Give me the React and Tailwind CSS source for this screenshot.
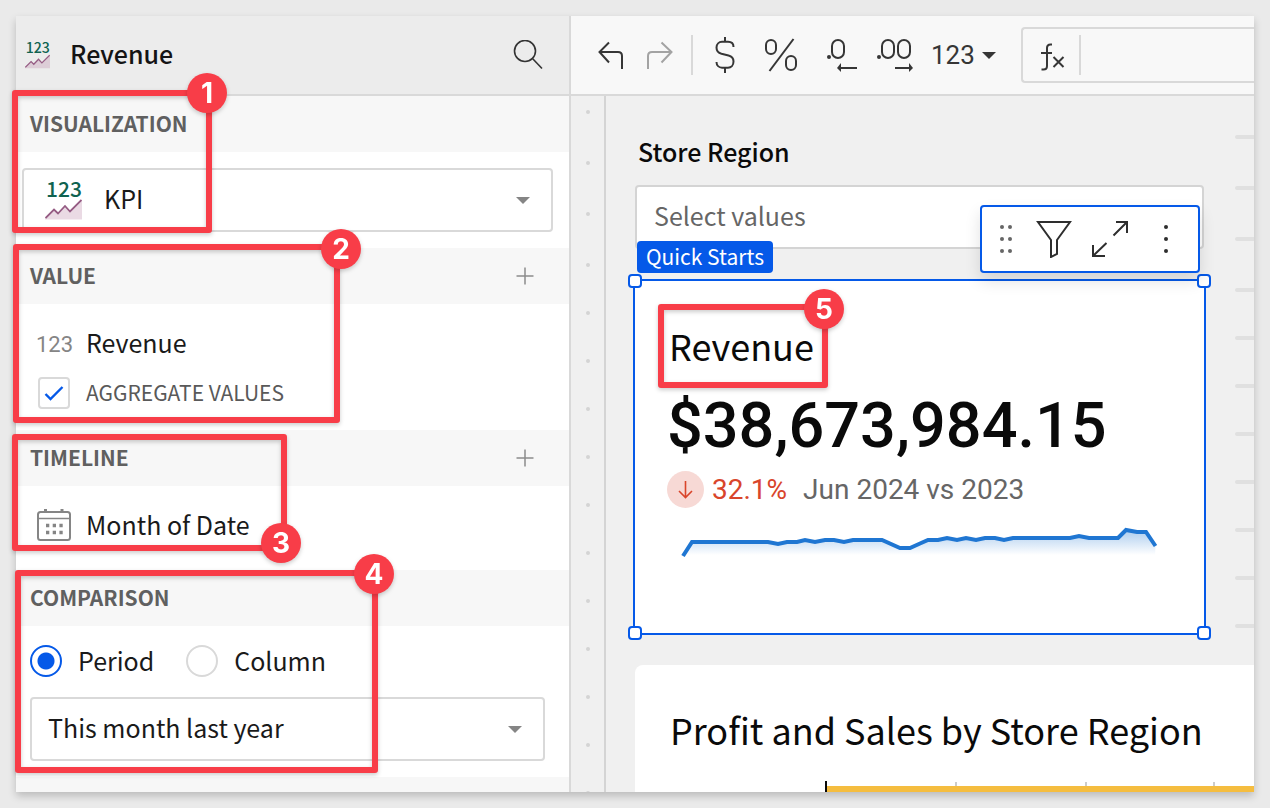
import React from "react";

const SANS = "font-['Noto_Sans_CJK_JP','Noto_Sans',sans-serif]";
const ROBOTO = "font-['Roboto',sans-serif]";

function Caret({ className = "" }) {
  return (
    <svg viewBox="0 0 14 7" className={`pointer-events-none h-[7px] w-[14px] shrink-0 fill-current ${className}`} aria-hidden="true">
      <path d="M0 0h14L7 7z" />
    </svg>
  );
}

function KpiIcon({ className }) {
  return (
    <svg viewBox="0 -9 37 57" className={`shrink-0 ${className}`} aria-hidden="true">
      <text x="1" y="16" className="fill-[#0f6350] font-['Noto_Sans_CJK_JP',sans-serif] text-[21px] font-medium">
        123
      </text>
      <path d="M0 37 9 28l4.500 4L20 25l5 5.500L37 19v19.500H0z" fill="#b884a6" fillOpacity="0.3" />
      <path d="M0.500 37 9 28.500l4 4L20 25l5 5.500L36.500 19" fill="none" stroke="#955b83" strokeWidth="1.800" />
    </svg>
  );
}

function SectionHeader({ title, action }) {
  return (
    <div className="flex h-14 items-center justify-between bg-[#f7f7f7] pr-[35px] pl-[14px]">
      <h2 className="pb-[2px] text-[21px] leading-8 font-bold text-[#606060]">{title}</h2>
      {action && (
        <button type="button" aria-label={action} className="text-[#8c8c8c]">
          <svg viewBox="0 0 18 18" className="h-[18px] w-[18px]" fill="none" stroke="currentColor" strokeWidth="1.500">
            <path d="M9 0.500v17M0.500 9h17" />
          </svg>
        </button>
      )}
    </div>
  );
}

function Radio({ label, ...rest }) {
  return (
    <label className="flex items-center gap-4 text-[25px] leading-8 text-[#1a1a1a]">
      <input
        type="radio"
        name="comparison"
        className="h-8 w-8 appearance-none rounded-full border-2 border-[#d9d9d9] bg-white checked:border-[#0559e8] checked:bg-[radial-gradient(circle,#0559e8_8px,#fff_9px)]"
        {...rest}
      />
      <span className="pb-[2px]">{label}</span>
    </label>
  );
}

function Sidebar() {
  return (
    <aside className="flex w-[555px] shrink-0 flex-col border-r-2 border-[#d9d9d9] bg-white">
      <header className="flex h-20 shrink-0 items-center border-b-2 border-[#d9d9d9] bg-[#ececec] pr-[26px] pl-[9px]">
        <KpiIcon className="h-[39px] w-[25px]" />
        <h1 className="ml-5 flex-1 pb-1 text-[25px] leading-8 font-medium text-[#141414]">Revenue</h1>
        <button type="button" aria-label="Search" className="text-[#333]">
          <svg viewBox="0 0 30 30" className="h-[30px] w-[30px]" fill="none" stroke="currentColor" strokeWidth="1.600">
            <circle cx="12" cy="11" r="10.500" />
            <path d="M19.500 18.500 29 28.500" />
          </svg>
        </button>
      </header>

      <SectionHeader title="VISUALIZATION" />
      <div className="py-4 pr-4 pl-[6px]">
        <div className="flex h-16 items-center rounded-[4px] border-2 border-[#d9d9d9] px-[21px]">
          <KpiIcon className="h-[57px] w-[37px]" />
          <select aria-label="Visualization" className="ml-[22px] h-full flex-1 appearance-none bg-transparent pb-[2px] text-[25px] text-[#1a1a1a]">
            <option>KPI</option>
          </select>
          <Caret className="text-[#858585]" />
        </div>
      </div>

      <SectionHeader title="VALUE" action="Add value" />
      <div className="pt-6 pb-[21px] pl-5">
        <div className="flex h-8 items-center">
          <span className={`w-[50px] text-[22px] text-[#858585] ${ROBOTO}`}>123</span>
          <span className="pb-1 text-[25px] leading-8 text-[#1a1a1a]">Revenue</span>
        </div>
        <label className="mt-[17px] flex h-8 items-center pl-[2px] text-[21px] leading-8 text-[#595959]">
          <span className="mr-4 grid">
            <input type="checkbox" defaultChecked className="peer col-start-1 row-start-1 h-8 w-8 appearance-none rounded-[4px] border-2 border-[#d9d9d9] bg-white" />
            <svg viewBox="0 0 32 32" className="pointer-events-none invisible col-start-1 row-start-1 h-8 w-8 peer-checked:visible" fill="none" stroke="#0559e8" strokeWidth="2.400">
              <path d="M7.500 17l5 5L24.500 10" />
            </svg>
          </span>
          <span className="pb-[2px]">AGGREGATE VALUES</span>
        </label>
      </div>

      <SectionHeader title="TIMELINE" action="Add timeline" />
      <div className="pt-[23px] pb-[29px] pl-[21px]">
        <div className="flex h-8 items-center">
          <svg viewBox="0 0 34 32" className="mr-[15px] h-8 w-[34px]" fill="none" stroke="#858585" strokeWidth="2" aria-hidden="true">
            <rect x="1" y="3" width="32" height="28" rx="2.500" />
            <path d="M1 9.500h32" strokeWidth="1.500" />
            <path d="M8.500 0v3M25 0v3" strokeWidth="3" />
            <path d="M9 16.500h17M9 23.500h17" strokeWidth="3.300" strokeDasharray="3.300 3.400" />
          </svg>
          <span className="pb-[2px] text-[25px] leading-8 text-[#1a1a1a]">Month of Date</span>
        </div>
      </div>

      <SectionHeader title="COMPARISON" />
      <div className="pt-[18px] pr-6 pb-4 pl-[14px]">
        <div className="flex gap-8">
          <Radio label="Period" defaultChecked />
          <Radio label="Column" />
        </div>
        <div className="mt-[19px] flex h-16 items-center rounded-[4px] border-2 border-[#d9d9d9] pr-[21px] pl-4">
          <select aria-label="Comparison period" className="h-full flex-1 appearance-none bg-transparent pb-[2px] text-[25px] text-[#1a1a1a]">
            <option>This month last year</option>
          </select>
          <Caret className="text-[#858585]" />
        </div>
      </div>
      <div className="min-h-0 flex-1 bg-[#f7f7f7]" />
    </aside>
  );
}

function ToolButton({ label, className = "", children }) {
  return (
    <button type="button" aria-label={label} className={`shrink-0 ${className}`}>
      {children}
    </button>
  );
}

function Toolbar() {
  return (
    <div className="flex h-20 shrink-0 items-center border-b-2 border-[#d9d9d9] bg-[#f8f8f8] pl-[27px] text-[#363636]">
      <ToolButton label="Undo">
        <svg viewBox="0 0 26 28" className="h-7 w-[26px]" fill="none" stroke="currentColor" strokeWidth="2">
          <path d="M11 1.500 1.500 11l9.500 10.500M1.500 11H20q4 0 4 4v13" />
        </svg>
      </ToolButton>
      <ToolButton label="Redo" className="ml-[23px] text-[#a3a3a3]">
        <svg viewBox="0 0 26 28" className="h-7 w-[26px]" fill="none" stroke="currentColor" strokeWidth="2">
          <path d="M14.500 1.500l10 9.500-10 10.500M24.500 11H5q-4 0-4 4v13" />
        </svg>
      </ToolButton>
      <div className="ml-[18px] h-10 w-[2px] shrink-0 bg-[#d9d9d9]" />
      <ToolButton label="Format as currency" className="ml-[22px]">
        <svg viewBox="0 0 20 36" className="h-9 w-5" fill="none" stroke="currentColor" strokeWidth="2">
          <path d="M18.500 10C18.500 6.500 16 4.800 13 4.800H7C4 4.800 1.500 7 1.500 10.500c0 3.500 2 5.500 5 6.300l7 1.700c3.500.800 5 2.700 5 6 0 3.700-2.500 6.200-5.500 6.200H7C4 30.700 1.500 28.500 1.500 25M10 0v5M10 31v5" />
        </svg>
      </ToolButton>
      <ToolButton label="Format as percent" className="ml-[30px]">
        <svg viewBox="0 0 32 34" className="h-[34px] w-8" fill="none" stroke="currentColor" strokeWidth="2">
          <rect x="1" y="2" width="10" height="14" rx="5" />
          <rect x="21" y="18" width="10" height="14" rx="5" />
          <path d="M28.500 1 4.500 33" />
        </svg>
      </ToolButton>
      <ToolButton label="Decrease decimals" className="ml-[30px]">
        <svg viewBox="0 0 30 34" className="h-[34px] w-[30px]" fill="none" stroke="currentColor" strokeWidth="2">
          <rect x="5" y="2" width="12" height="18" rx="6" />
          <circle cx="2" cy="19" r="2" fill="currentColor" stroke="none" />
          <path d="M12 30h18" />
          <path d="M10 30l4-5v9z" fill="currentColor" stroke="none" />
        </svg>
      </ToolButton>
      <ToolButton label="Increase decimals" className="ml-5">
        <svg viewBox="0 0 37 34" className="h-[34px] w-[37px]" fill="none" stroke="currentColor" strokeWidth="2">
          <rect x="5" y="2" width="12" height="18" rx="6" />
          <rect x="21" y="2" width="12" height="18" rx="6" />
          <circle cx="2" cy="19" r="2" fill="currentColor" stroke="none" />
          <path d="M18 30h16" />
          <path d="M36 30l-4-5v9z" fill="currentColor" stroke="none" />
        </svg>
      </ToolButton>
      <ToolButton label="Number format" className="ml-[17px] flex items-center gap-[7px]">
        <span className={`text-[26px] leading-8 ${ROBOTO}`}>123</span>
        <Caret />
      </ToolButton>
      <div className="ml-[25px] flex h-14 min-w-0 flex-1 items-center rounded-l-[4px] border-2 border-r-0 border-[#d9d9d9] pl-[18px]">
        <svg viewBox="0 -3 24 32" className="h-8 w-6 shrink-0" fill="none" stroke="currentColor" strokeWidth="2" aria-hidden="true">
          <path d="M11 2.500H9.500Q6 2.500 6 6v18q0 3.500-3.500 3.500H0.500M0 11h11" />
          <path d="M12.500 15 22.500 25M22.500 15 12.500 25" />
        </svg>
        <div className="ml-[14px] h-10 w-[2px] shrink-0 bg-[#d9d9d9]" />
        <input type="text" aria-label="Formula" className="h-full min-w-0 flex-1 bg-transparent px-3 text-[25px] outline-none" />
      </div>
    </div>
  );
}

const HANDLES = [
  "-top-[7px] -left-[7px]",
  "-top-[7px] -right-[7px]",
  "-bottom-[7px] -left-[7px]",
  "-bottom-[7px] -right-[7px]",
];

const TREND =
  "683,556 692,542 768,542 778,544 787,542 797,542 805,540 815,542 825,540 834,540 844,542 853,540 882,540 900,548 910,548 920,543.500 928,540 938,540 947,538 957,540 966,538 976,540 985,538 995,538 1004,540 1013,538 1070,538 1079,536 1089,538 1118,538 1126,530 1137,532 1146,532 1155.500,546";

function ElementToolbar() {
  return (
    <div className="absolute right-[4px] -bottom-6 z-10 flex h-[68px] w-[220px] items-center rounded-[4px] border-2 border-[#0559e8] bg-white pl-[18px] text-[#2e2e2e] shadow-[0_8px_16px_rgba(0,0,0,0.12)]">
      <ToolButton label="Drag element" className="text-[#666]">
        <svg viewBox="0 0 12 28" className="h-7 w-3 fill-current">
          <circle cx="2" cy="2" r="2" /><circle cx="10" cy="2" r="2" />
          <circle cx="2" cy="14" r="2" /><circle cx="10" cy="14" r="2" />
          <circle cx="2" cy="26" r="2" /><circle cx="10" cy="26" r="2" />
        </svg>
      </ToolButton>
      <ToolButton label="Filter" className="ml-6">
        <svg viewBox="0 0 36 38" className="h-[38px] w-9" fill="none" stroke="currentColor" strokeWidth="2">
          <path d="M2 2h32L21 20v14l-6 3V20z" />
        </svg>
      </ToolButton>
      <ToolButton label="Expand" className="ml-5">
        <svg viewBox="0 0 36 36" className="h-9 w-9" fill="none" stroke="currentColor" strokeWidth="2">
          <path d="M24 1h11v11M35 1 21.500 14.500M1 24v11h12M1 35 14.500 22" />
        </svg>
      </ToolButton>
      <ToolButton label="More options" className="ml-9">
        <svg viewBox="0 0 4 28" className="h-7 w-1 fill-current">
          <circle cx="2" cy="2" r="2" /><circle cx="2" cy="14" r="2" /><circle cx="2" cy="26" r="2" />
        </svg>
      </ToolButton>
    </div>
  );
}

function KpiCard() {
  return (
    <section className="relative -mx-[2px] mt-[30px] border-2 border-[#0559e8] bg-white px-8 pt-[38px] pb-[73px]">
      <span className="absolute -top-10 left-[2px] rounded-[4px] bg-[#0559e8] px-[9px] pb-[2px] text-[21px] leading-[30px] text-white">Quick Starts</span>
      {HANDLES.map((pos) => (
        <span key={pos} className={`absolute h-[14px] w-[14px] rounded-[4px] border-2 border-[#0559e8] bg-white ${pos}`} />
      ))}
      <h3 className="pl-[2px] text-[36px] leading-[52px] text-[#0a0a0a]">Revenue</h3>
      <p className={`mt-[19px] text-[63px] leading-[72px] font-medium text-[#0a0a0a] ${ROBOTO}`}>$38,673,984.15</p>
      <p className={`mt-[9px] flex items-center text-[28px] leading-9 ${ROBOTO}`}>
        <svg viewBox="0 0 37 37" className="h-[37px] w-[37px]" aria-hidden="true">
          <circle cx="18.500" cy="18.500" r="18.500" fill="#f7d9d5" />
          <path d="M18.500 10v16.500M12 20l6.500 6.500L25 20" fill="none" stroke="#d9452b" strokeWidth="1.600" />
        </svg>
        <span className="ml-2 text-[#d9452b]">32.1%</span>
        <span className="ml-4 text-[#666]">Jun 2024 vs 2023</span>
      </p>
      <svg viewBox="667 520 500 40" className="mt-3 h-10 w-[500px] max-w-full" role="img" aria-label="Revenue trend">
        <defs>
          <linearGradient id="trend" gradientUnits="userSpaceOnUse" x1="0" y1="528" x2="0" y2="555">
            <stop offset="0" stopColor="#1f76d2" stopOpacity="0.4" />
            <stop offset="1" stopColor="#1f76d2" stopOpacity="0" />
          </linearGradient>
        </defs>
        <polygon points={`${TREND} 1155,556`} fill="url(#trend)" />
        <polyline points={TREND} fill="none" stroke="#1f76d2" strokeWidth="4" />
      </svg>
    </section>
  );
}

function Canvas() {
  return (
    <div className="flex min-h-0 flex-1 overflow-hidden bg-[#f0f0f0]">
      <div className="flex w-[35px] shrink-0 flex-col items-center border-r-2 border-[#d4d4d4] pt-[14px]">
        {Array.from({ length: 15 }, (_, i) => (
          <span key={i} className={i < 3 ? "h-[51px] shrink-0" : "h-12 shrink-0"}>
            <span className="block h-1 w-1 rounded-full bg-[#d4d4d4]" />
          </span>
        ))}
      </div>
      <main className="min-w-0 flex-1 pl-[29px]">
        <div className="flex">
          <div className="min-w-0 flex-1 pt-[39px]">
            <label htmlFor="region" className="block pl-[3px] text-[25px] leading-8 font-medium text-[#0a0a0a]">Store Region</label>
            <div className="relative mt-[18px]">
              <input id="region" type="text" placeholder="Select values" className="block h-16 w-full rounded-[4px] border-2 border-[#d4d4d4] bg-white px-[17px] pb-1 text-[25px] placeholder:text-[#666]" />
              <ElementToolbar />
            </div>
            <KpiCard />
          </div>
          <div className="ml-[31px] flex w-[19px] shrink-0 flex-col pt-[39px]">
            {Array.from({ length: 11 }, (_, i) => (
              <span key={i} className={i < 3 ? "h-[51px] shrink-0" : i < 10 ? "h-12 shrink-0" : "h-1 shrink-0"}>
                <span className="block h-1 rounded-l-full bg-[#e0e0e0]" />
              </span>
            ))}
          </div>
        </div>
        <section className="mt-[30px] rounded-tl-[8px] bg-white pt-[38px] pl-[35px]">
          <h3 className="text-[36px] leading-[52px] whitespace-nowrap text-[#0a0a0a]">Profit and Sales by Store Region</h3>
          <svg className="mt-[26px] ml-[155px] h-[60px] w-[429px]" role="img" aria-label="Profit and sales bars">
            <path d="M131 1v5M261 1v5M389 1v5" stroke="#ccc" strokeWidth="2" />
            <rect x="2" y="5" width="427" height="55" fill="#f5bd3f" />
            <rect x="0" y="0" width="2" height="60" fill="#0a0a0a" />
          </svg>
        </section>
      </main>
    </div>
  );
}

const CALLOUTS = [
  { n: 1, box: "top-[90px] left-[12px] h-[143px] w-[200px]", badge: "-top-[17px] -right-[15px]" },
  { n: 2, box: "top-[244px] left-[13px] h-[179px] w-[327px]", badge: "-top-[15px] -right-[21px]" },
  { n: 3, box: "top-[434px] left-[12px] h-[117px] w-[275px]", badge: "-bottom-[12px] -right-[14px]" },
  { n: 4, box: "top-[570px] left-[15px] h-[203px] w-[363px]", badge: "-top-[16px] -right-[16px]" },
  { n: 5, box: "top-[304px] left-[658px] h-[84px] w-[170px]", badge: "-top-[15px] -right-[16px]" },
];

function Callout({ n, box, badge }) {
  return (
    <div className={`pointer-events-none absolute z-20 ${box}`}>
      <div className="h-full w-full rounded-[3px] border-6 border-[#f83d48] drop-shadow-[0_2px_2px_rgba(0,0,0,0.2)]" />
      <span className={`absolute flex h-10 w-10 items-center justify-center rounded-full bg-[#f83d48] font-['Inter',sans-serif] text-[28px] font-bold text-white drop-shadow-[0_2px_2px_rgba(0,0,0,0.2)] ${badge}`}>
        {n}
      </span>
    </div>
  );
}

export default function App() {
  return (
    <div className={`relative h-screen overflow-hidden bg-[#eaeaea] p-4 ${SANS}`}>
      <div className="flex h-full overflow-hidden shadow-[0_4px_8px_rgba(0,0,0,0.2)]">
        <Sidebar />
        <div className="flex min-w-0 flex-1 flex-col">
          <Toolbar />
          <Canvas />
        </div>
      </div>
      {CALLOUTS.map((c) => (
        <Callout key={c.n} {...c} />
      ))}
    </div>
  );
}
